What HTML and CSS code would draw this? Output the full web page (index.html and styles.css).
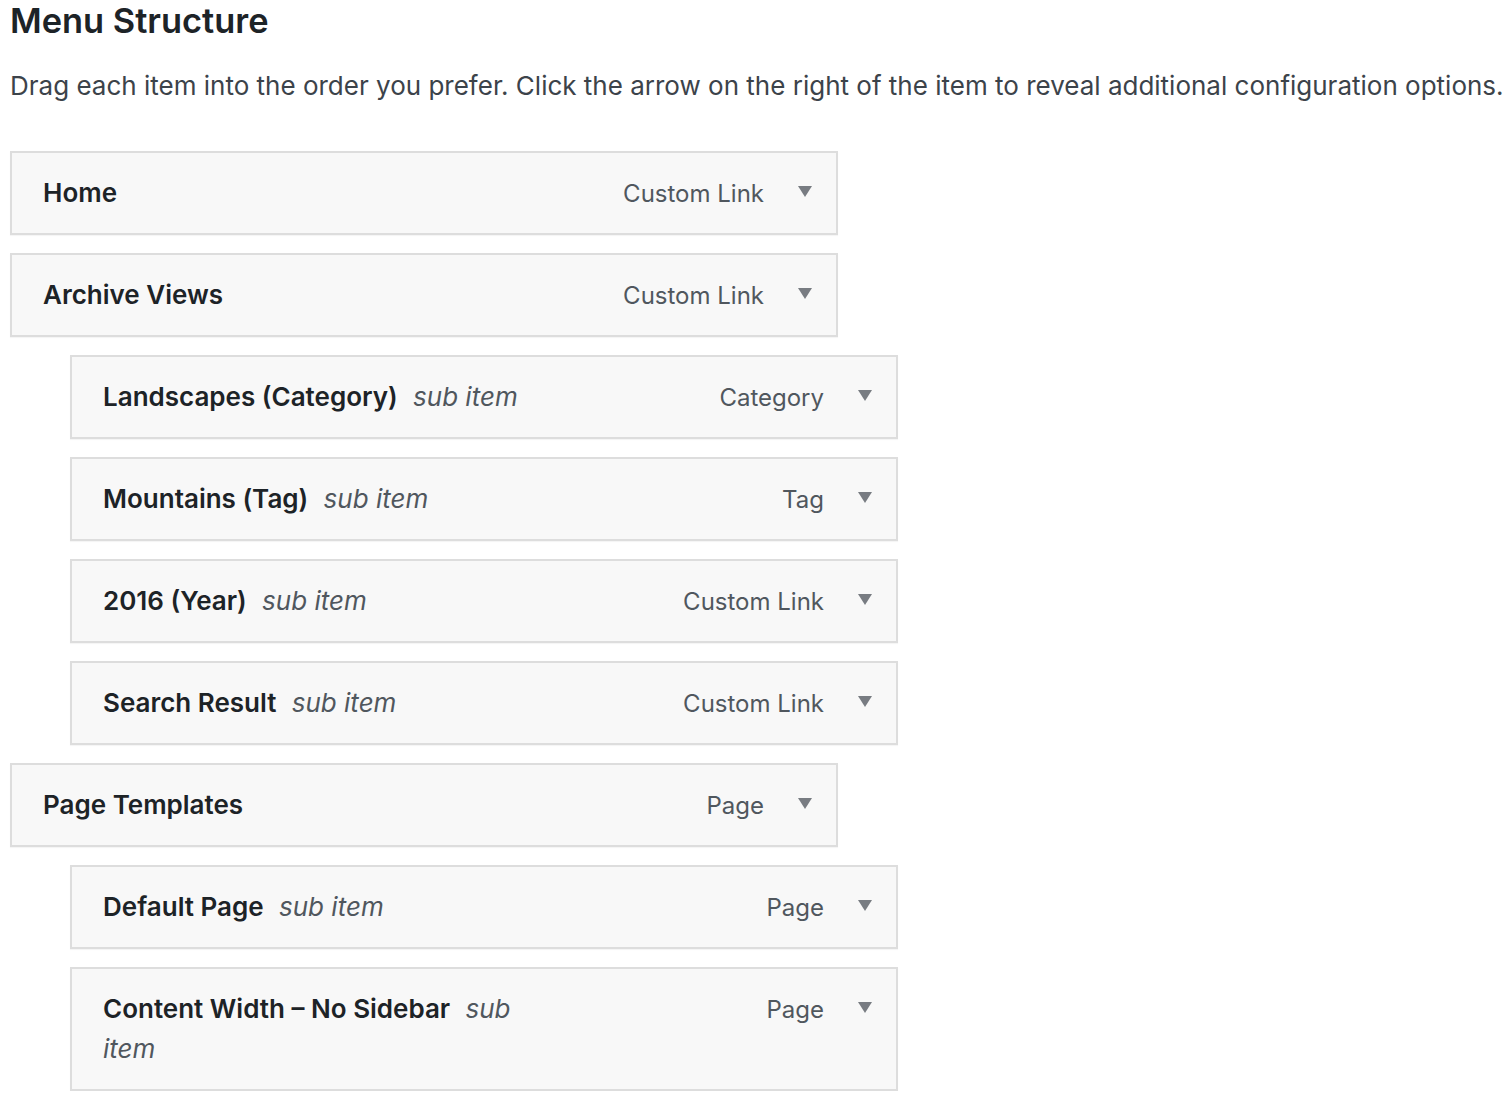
FILE: index.html
```html
<!DOCTYPE html>
<html lang="en">
<head>
<meta charset="utf-8">
<title>Menu Structure</title>
<link rel="stylesheet" href="styles.css">
</head>
<body>
<main class="page">
  <h2 class="heading">Menu Structure</h2>
  <p class="intro">Drag each item into the order you prefer. Click the arrow on the right of the item to reveal additional configuration options.</p>
  <ul class="menu">
    <li class="item depth-0">
      <div class="title"><span class="name">Home</span></div>
      <div class="controls"><span class="type">Custom Link</span><span class="arrow"></span></div>
    </li>
    <li class="item depth-0">
      <div class="title"><span class="name">Archive Views</span></div>
      <div class="controls"><span class="type">Custom Link</span><span class="arrow"></span></div>
    </li>
    <li class="item depth-1">
      <div class="title"><span class="name">Landscapes (Category)</span> <span class="sub">sub item</span></div>
      <div class="controls"><span class="type">Category</span><span class="arrow"></span></div>
    </li>
    <li class="item depth-1">
      <div class="title"><span class="name">Mountains (Tag)</span> <span class="sub">sub item</span></div>
      <div class="controls"><span class="type">Tag</span><span class="arrow"></span></div>
    </li>
    <li class="item depth-1">
      <div class="title"><span class="name">2016 (Year)</span> <span class="sub">sub item</span></div>
      <div class="controls"><span class="type">Custom Link</span><span class="arrow"></span></div>
    </li>
    <li class="item depth-1">
      <div class="title"><span class="name">Search Result</span> <span class="sub">sub item</span></div>
      <div class="controls"><span class="type">Custom Link</span><span class="arrow"></span></div>
    </li>
    <li class="item depth-0">
      <div class="title"><span class="name">Page Templates</span></div>
      <div class="controls"><span class="type">Page</span><span class="arrow"></span></div>
    </li>
    <li class="item depth-1">
      <div class="title"><span class="name">Default Page</span> <span class="sub">sub item</span></div>
      <div class="controls"><span class="type">Page</span><span class="arrow"></span></div>
    </li>
    <li class="item depth-1">
      <div class="title"><span class="name">Content Width – No Sidebar</span> <span class="sub">sub item</span></div>
      <div class="controls"><span class="type">Page</span><span class="arrow"></span></div>
    </li>
  </ul>
</main>
</body>
</html>
```

FILE: styles.css
```css
html, body {
  margin: 0;
  padding: 0;
  background: #ffffff;
}

body {
  font-family: Inter, "Noto Sans", "Liberation Sans", sans-serif;
  color: #1d2327;
}

.page {
  padding: 0 0 0 10px;
}

.heading {
  margin: 0;
  padding-top: 1px;
  font-size: 34.4px;
  line-height: 40px;
  font-weight: 600;
  color: #1d2327;
}

.intro {
  margin: 25px 0 0;
  font-size: 26px;
  line-height: 40px;
  color: #3c434a;
  white-space: nowrap;
}

.menu {
  list-style: none;
  margin: 45px 0 0;
  padding: 0;
  display: flex;
  flex-direction: column;
  gap: 18px;
}

.item {
  box-sizing: border-box;
  width: 828px;
  display: flex;
  align-items: flex-start;
  padding: 20px 0 20px 31px;
  background: #f8f8f8;
  border: 2px solid #dddddd;
  box-shadow: 0 1px 1px rgba(0, 0, 0, 0.04);
}

.depth-1 {
  margin-left: 60px;
}

.title {
  flex: 0 0 440px;
  font-size: 26px;
  line-height: 40px;
}

.name {
  font-weight: 600;
  color: #1d2327;
}

.sub {
  margin-left: 8px;
  font-style: italic;
  font-weight: 400;
  color: #50575e;
}

.controls {
  flex: 0 0 auto;
  display: flex;
  align-items: center;
  height: 40px;
  margin-left: auto;
}

.type {
  font-size: 24px;
  color: #50575e;
  margin-right: 34px;
}

.arrow {
  width: 0;
  height: 0;
  border-left: 7.5px solid transparent;
  border-right: 7.5px solid transparent;
  border-top: 11px solid #787c82;
  margin-right: 24px;
  margin-top: -3px;
}
```
